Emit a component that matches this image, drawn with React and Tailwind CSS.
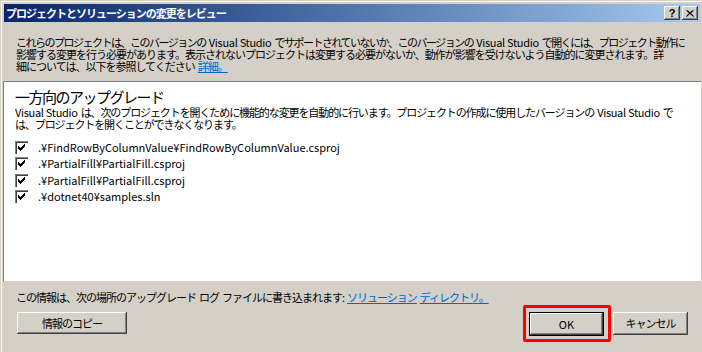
const jp = { fontFamily: '"Noto Sans CJK JP", "Liberation Sans", sans-serif' };

const raised =
  "shadow-[inset_-1px_-1px_#404040,inset_1px_1px_#ffffff,inset_-2px_-2px_#808080,inset_2px_2px_#d4d0c8]";

const Sp = () => <span className="inline-block w-[3px]" />;
const VS = () => <span className="tracking-[-0.3px]">Visual Studio</span>;

function CaptionButton({ children }) {
  return (
    <div className={`w-[16px] h-[14px] bg-[#d4d0c8] flex items-center justify-center ${raised}`}>
      {children}
    </div>
  );
}

function CheckBox() {
  return (
    <div className="w-[13px] h-[13px] shrink-0 border-t border-l border-[#808080] border-r-white border-b-white bg-[#d4d0c8]">
      <div className="w-full h-full border-t border-l border-[#404040] border-r-[#d4d0c8] border-b-[#d4d0c8] bg-white">
        <svg width="9" height="9" viewBox="0 0 9 9" className="block">
          <path d="M1.5 3.5 L3.5 5.5 L7.5 1.5 M1.5 4.5 L3.5 6.5 L7.5 2.5 M1.5 5.5 L3.5 7.5 L7.5 3.5" stroke="#000" strokeWidth="1" fill="none" shapeRendering="crispEdges" />
        </svg>
      </div>
    </div>
  );
}

function Button({ children, className = "" }) {
  return (
    <div className={`h-[22px] bg-[#d4d0c8] flex items-center justify-center text-[11px] text-black ${raised} ${className}`}>
      {children}
    </div>
  );
}

const files = [
  ".¥FindRowByColumnValue¥FindRowByColumnValue.csproj",
  ".¥PartialFill¥PartialFill.csproj",
  ".¥PartialFill¥PartialFill.csproj",
  ".¥dotnet40¥samples.sln",
];

export default function App() {
  return (
    <div style={jp} className="w-[702px] h-[352px] bg-[#d4d0c8] border-t border-l border-[#d4d0c8] border-r-[#404040] border-b-[#404040]">
      <div className="w-full h-full border-t border-l border-white border-r-[#808080] border-b-[#808080] p-[2px] flex flex-col">
        {/* Title bar */}
        <div className="h-[18px] shrink-0 bg-gradient-to-r from-[#0a246a] to-[#a6caf0] flex items-center justify-between pl-[2px] pr-[2px]">
          <span className="text-white font-bold text-[11px] tracking-[-1px] leading-none">
            プロジェクトとソリューションの変更をレビュー
          </span>
          <div className="flex">
            <CaptionButton>
              <span className="text-[11px] font-bold leading-none text-black" style={{ fontFamily: '"Liberation Sans", sans-serif' }}>?</span>
            </CaptionButton>
            <div className="w-[2px]" />
            <CaptionButton>
              <svg width="8" height="7" viewBox="0 0 8 7">
                <path d="M0.5 0.5 L7.5 6.5 M7.5 0.5 L0.5 6.5 M1.5 0.5 L7.5 6 M6.5 0.5 L0.5 6" stroke="#000" strokeWidth="1" />
              </svg>
            </CaptionButton>
          </div>
        </div>

        {/* Intro text */}
        <div className="px-[12px] pt-[14px] text-[11px] leading-[12px] tracking-[-1px] text-black whitespace-nowrap">
          <div className="tracking-[-1.5px]">
            これらのプロジェクトは、このバージョンの<Sp /><VS /><Sp />でサポートされていないか、このバージョンの<Sp /><VS /><Sp />で開くには、プロジェクト動作に
          </div>
          <div>影響する変更を行う必要があります。表示されないプロジェクトは変更する必要がないか、動作が影響を受けないよう自動的に変更されます。詳</div>
          <div>
            細については、以下を参照してください<Sp />
            <span className="text-[#0066cc] underline">詳細。</span>
          </div>
        </div>

        {/* White panel */}
        <div className="mt-[9px] h-[200px] shrink-0 bg-white border-t border-l border-[#808080] border-r-white border-b-white -mx-[1px] px-[11px] pt-[5px]">
          <div className="text-[15px] leading-[19px] tracking-[-1.5px] text-black">一方向のアップグレード</div>
          <div className="text-[11px] leading-[12px] tracking-[-1.1px] text-black whitespace-nowrap">
            <div>
              <VS /><Sp />は、次のプロジェクトを開くために機能的な変更を自動的に行います。プロジェクトの作成に使用したバージョンの<Sp /><VS /><Sp />で
            </div>
            <div>は、プロジェクトを開くことができなくなります。</div>
          </div>
          <div className="mt-[9px] flex flex-col">
            {files.map((f, i) => (
              <div key={i} className="h-[16.5px] flex items-center gap-[10px]">
                <CheckBox />
                <span className="text-[11px] leading-none text-black">{f}</span>
              </div>
            ))}
          </div>
        </div>

        {/* Footer */}
        <div className="px-[12px] pt-[10px] text-[11px] leading-[12px] tracking-[-1px] text-black whitespace-nowrap">
          この情報は、次の場所のアップグレード<Sp />ログ<Sp />ファイルに書き込まれます:<Sp />
          <span className="text-[#0066cc] underline">
            ソリューション<Sp />ディレクトリ。
          </span>
        </div>
        <div className="mt-[9px] pl-[13px] pr-[12px] flex items-start justify-between">
          <Button className="w-[110px] tracking-[-1px]">情報のコピー</Button>
          <div className="flex gap-[9px]">
            <div className="relative">
              <div className="absolute left-[-6px] right-[-7px] top-[-7px] bottom-[-6px] border-[3px] border-[#ff0000] rounded-[2px]" />
              <div className="border border-black">
                <Button className="w-[73px] h-[21px]">OK</Button>
              </div>
            </div>
            <Button className="w-[75px] h-[23px] tracking-[-1px]">キャンセル</Button>
          </div>
        </div>
      </div>
    </div>
  );
}
